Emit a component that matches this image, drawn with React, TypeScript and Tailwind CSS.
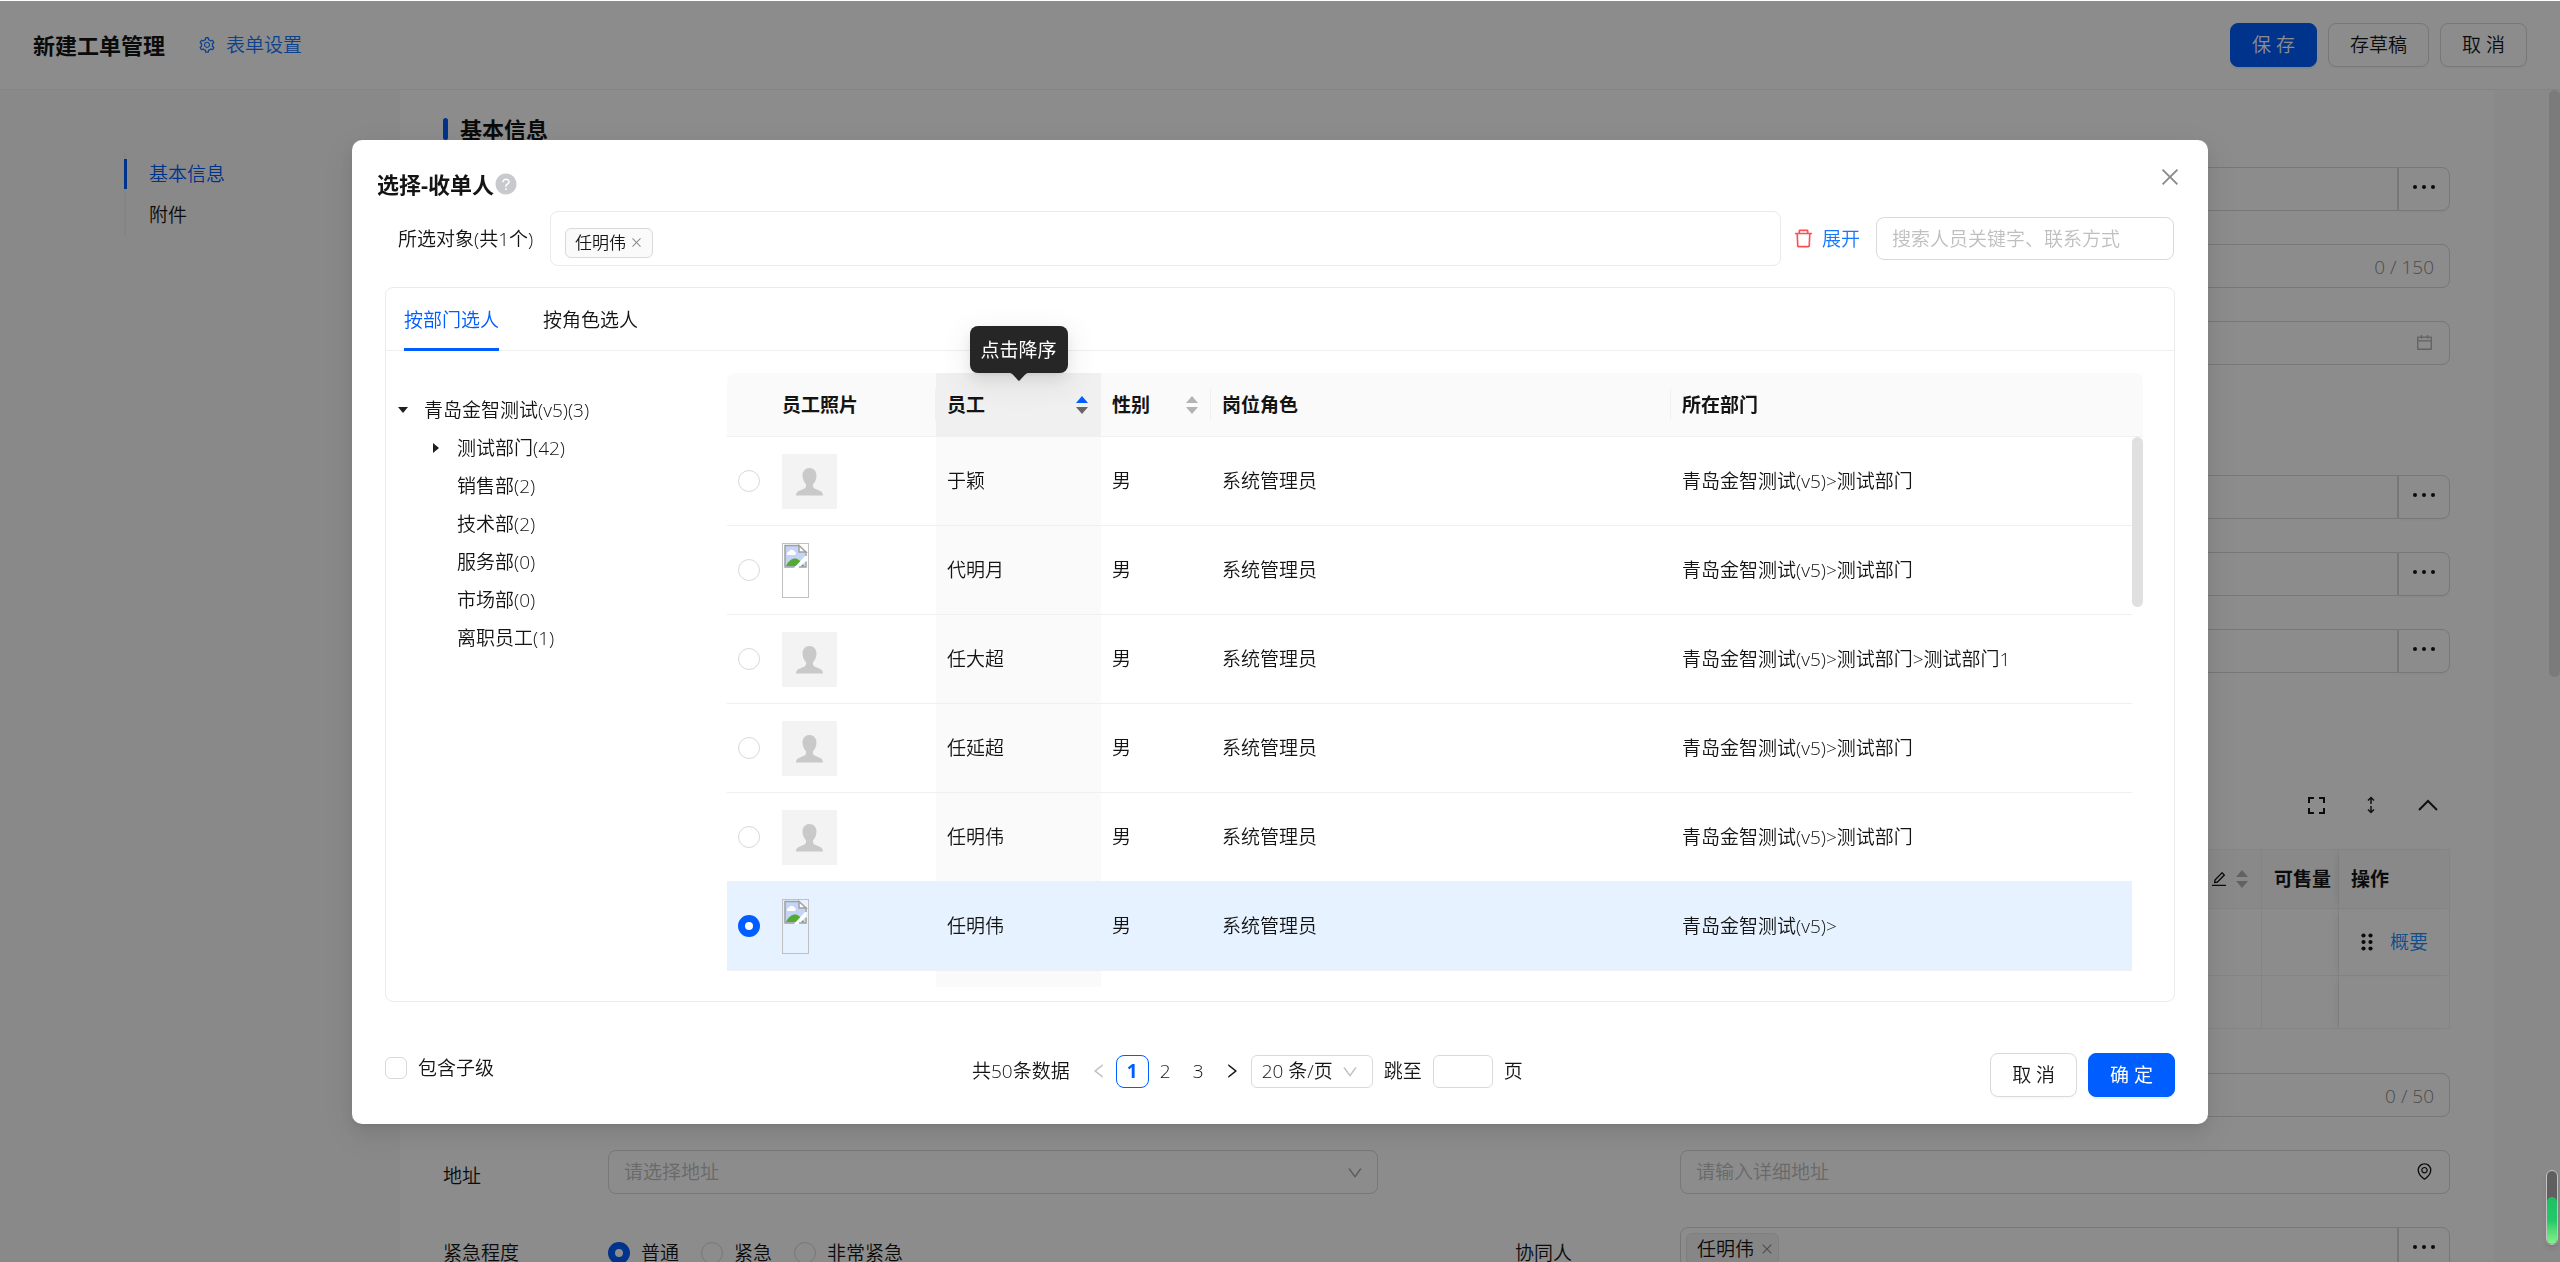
import { useState, type ReactNode } from "react";
import {
  AiFillQuestionCircle,
  AiOutlineCalendar,
  AiOutlineClose,
  AiOutlineDelete,
  AiOutlineDown,
  AiOutlineEdit,
  AiOutlineEnvironment,
  AiOutlineLeft,
  AiOutlineRight,
  AiOutlineSetting,
  AiOutlineUp,
} from "react-icons/ai";
import clsx from "clsx";

type Employee = {
  id: number;
  name: string;
  gender: string;
  role: string;
  dept: string;
  broken?: boolean;
};

const employees: Employee[] = [
  { id: 1, name: "于颖", gender: "男", role: "系统管理员", dept: "青岛金智测试(v5)>测试部门" },
  { id: 2, name: "代明月", gender: "男", role: "系统管理员", dept: "青岛金智测试(v5)>测试部门", broken: true },
  { id: 3, name: "任大超", gender: "男", role: "系统管理员", dept: "青岛金智测试(v5)>测试部门>测试部门1" },
  { id: 4, name: "任延超", gender: "男", role: "系统管理员", dept: "青岛金智测试(v5)>测试部门" },
  { id: 5, name: "任明伟", gender: "男", role: "系统管理员", dept: "青岛金智测试(v5)>测试部门" },
  { id: 6, name: "任明伟", gender: "男", role: "系统管理员", dept: "青岛金智测试(v5)>", broken: true },
];

const departments = [
  { label: "测试部门(42)", expandable: true },
  { label: "销售部(2)" },
  { label: "技术部(2)" },
  { label: "服务部(0)" },
  { label: "市场部(0)" },
  { label: "离职员工(1)" },
];

const radioClass =
  "block size-[22px] shrink-0 appearance-none rounded-full border border-[#d9d9d9] bg-white checked:border-[7px] checked:border-[#005dff]";
const buttonClass =
  "h-11 rounded-lg border border-[#d9d9d9] bg-white px-[21px] shadow-[0_2px_0_rgba(0,0,0,0.02)]";
const primaryClass =
  "h-11 rounded-lg border border-[#005dff] bg-[#005dff] px-[21px] text-white shadow-[0_2px_0_rgba(5,145,255,0.1)]";

function Sorter({ active }: { active?: boolean }) {
  return (
    <svg width="12" height="20" viewBox="0 0 12 20">
      <path d="M0 8 L6 1 L12 8 Z" fill={active ? "#005dff" : "#b3b3b3"} />
      <path d="M0 12 L6 19 L12 12 Z" fill={active ? "#666" : "#b3b3b3"} />
    </svg>
  );
}

function Dots() {
  return (
    <svg width="24" height="6" viewBox="0 0 24 6" fill="#141414">
      <circle cx="3" cy="3" r="2" />
      <circle cx="12" cy="3" r="2" />
      <circle cx="21" cy="3" r="2" />
    </svg>
  );
}

function Avatar() {
  return (
    <svg width="55" height="55" viewBox="0 0 55 55">
      <rect width="55" height="55" fill="#f3f3f3" />
      <path
        fill="#c9c9c9"
        d="M27.5 14 C31.8 14 34.5 17.3 34.5 21.5 C34.5 25 33 28.500 31 30.200 C30.600 32.500 31.300 34 33.500 35 C37.500 36.800 41 37.300 41 41.500 H14 C14 37.300 17.500 36.800 21.500 35 C23.700 34 24.400 32.500 24 30.200 C22 28.500 20.500 25 20.500 21.500 C20.500 17.300 23.200 14 27.500 14 Z"
      />
    </svg>
  );
}

function BrokenImage() {
  return (
    <svg width="27" height="55" viewBox="0 0 27 55">
      <rect x="0.5" y="0.5" width="26" height="54" fill="none" stroke="#c0c0c0" />
      <path d="M3 3 H17 L23 9 V24 H3 Z" fill="#c3d4f7" />
      <path d="M5 12 a2.500 2.500 0 0 1 2-3.500 a3 3 0 0 1 5.500 0 a2 2 0 0 1 .500 3.500 Z" fill="#fff" />
      <path d="M4 23 C6 18 10 15.500 13 15.500 C16 15.500 18.500 17.500 22 23 Z" fill="#57a935" />
      <path d="M24 12 L12 25 L17 25 L24 18 Z" fill="#fff" />
      <path d="M24 8.500 V13 M24 18.500 V24 H17 M12.500 24 H3 V2.500 H17" fill="none" stroke="#a0a0a0" strokeWidth="1.500" />
      <path d="M17 2.500 V9 H24 Z" fill="#fff" stroke="#a0a0a0" strokeWidth="1.500" />
    </svg>
  );
}

function Field({ label, name, children }: { label?: string; name: string; children?: ReactNode }) {
  return (
    <div className="col-start-2 flex">
      <div className="flex w-[165px] shrink-0 items-center pt-2">{label}</div>
      <div className="relative flex h-11 flex-1">
        <input aria-label={name} className="w-full rounded-lg border border-[#d9d9d9] bg-white px-4" />
        {children}
      </div>
    </div>
  );
}

function PickerField({ name, label, tag }: { name: string; label?: string; tag?: string }) {
  return (
    <div className="col-start-2 flex">
      <div className="flex w-[165px] shrink-0 items-center pt-2">{label}</div>
      <div className="relative flex h-11 flex-1">
        <input aria-label={name} className="min-w-0 flex-1 rounded-l-lg border border-[#d9d9d9] bg-white" />
        {tag && (
          <span className="absolute top-1.5 left-1.5 flex h-8 items-center gap-1.5 rounded-md border border-[#e8e8e8] bg-[#f5f5f5] pr-1 pl-2.5">
            {tag}
            <AiOutlineClose className="size-3.5 text-[#8c8c8c]" />
          </span>
        )}
        <button
          aria-label={name}
          className="flex w-13 items-center justify-center rounded-r-lg border border-[#d9d9d9] bg-white pb-1 shadow-[0_2px_0_rgba(0,0,0,0.02)]"
        >
          <Dots />
        </button>
      </div>
    </div>
  );
}

function PageForm() {
  return (
    <div className="flex h-screen flex-col overflow-hidden bg-white">
      <header className="flex h-[90px] shrink-0 items-center border-b border-[#f0f0f0] px-[33px]">
        <h1 className="text-[22px] font-bold">新建工单管理</h1>
        <a href="#settings" className="ml-[33px] flex items-center gap-2.5 text-[#1677ff]">
          <AiOutlineSetting className="size-[18px]" />
          表单设置
        </a>
        <div className="ml-auto flex gap-[11px]">
          <button className={primaryClass}>保 存</button>
          <button className={buttonClass}>存草稿</button>
          <button className={buttonClass}>取 消</button>
        </div>
      </header>

      <div className="relative flex flex-1 bg-[#fafafa]">
        <aside className="w-100 shrink-0 pt-[63px] pl-31">
          <ul className="border-l-2 border-[#f0f0f0] pl-[23px]">
            <li className="relative flex h-[41px] items-center text-[#005dff]">
              <span className="absolute top-1.5 -left-[25px] h-[30px] w-[3px] bg-[#005dff]" />
              <a href="#base">基本信息</a>
            </li>
            <li className="flex h-[41px] items-center">
              <a href="#files">附件</a>
            </li>
          </ul>
        </aside>

        <main className="min-w-0 flex-1 bg-white pt-7 pr-11 pl-[43px]">
          <h2 className="flex h-[22px] items-center gap-3 text-[22px] leading-[22px] font-bold">
            <span className="h-full w-[5px] rounded-sm bg-[#005dff]" />
            基本信息
          </h2>

          <div className="mt-[27px] grid grid-cols-2 gap-x-[137px] gap-y-[33px]">
            <PickerField name="客户" />
            <Field name="主题">
              <span className="absolute right-4 leading-[46px] text-[#8c8c8c]">0 / 150</span>
            </Field>
            <Field name="日期">
              <AiOutlineCalendar className="absolute top-3 right-4 size-[19px] text-[#b3b3b3]" />
            </Field>
          </div>
          <div className="mt-[110px] grid grid-cols-2 gap-x-[137px] gap-y-[33px]">
            <PickerField name="联系人" />
            <PickerField name="收单人" />
            <PickerField name="部门" />
          </div>

          <div className="mt-[120px] mb-8 flex h-6 items-center justify-end gap-[42px] pr-[11px]">
            <svg width="17" height="17" viewBox="0 0 17 17" fill="none" stroke="#141414" strokeWidth="2">
              <path d="M1 6 V1 H6 M11 1 H16 V6 M16 11 V16 H11 M6 16 H1 V11" />
            </svg>
            <svg width="8" height="18" viewBox="0 0 8 18" fill="none" stroke="#1f1f1f" strokeWidth="1.500">
              <path d="M4 8 V1.500 M1 4.500 L4 1.500 L7 4.500 M4 10 V16.500 M1 13.500 L4 16.500 L7 13.500" />
            </svg>
            <svg width="22" height="14" viewBox="0 0 22 14" fill="none" stroke="#1f1f1f" strokeWidth="2">
              <path d="M2 12 L11 3 L20 12" />
            </svg>
          </div>

          <table className="w-full table-fixed border-separate border-spacing-0 border-t border-r border-[#f0f0f0] text-left">
            <colgroup>
              <col />
              <col className="w-[77px]" />
              <col className="w-[110px]" />
            </colgroup>
            <thead>
              <tr className="h-[59px] bg-[#fafafa]">
                <th className="border-r border-b border-[#f0f0f0] pr-[13px]">
                  <div className="flex items-center justify-end gap-2">
                    <AiOutlineEdit className="size-[18px]" />
                    <Sorter />
                  </div>
                </th>
                <th className="border-r border-b border-[#f0f0f0] pl-3 font-bold whitespace-nowrap">可售量</th>
                <th className="border-b border-[#f0f0f0] pl-3 font-bold shadow-[-6px_0_8px_-4px_rgba(0,0,0,0.08)]">操作</th>
              </tr>
            </thead>
            <tbody>
              <tr className="h-[67px]">
                <td className="border-r border-b border-[#f0f0f0]" />
                <td className="border-r border-b border-[#f0f0f0]" />
                <td className="border-b border-[#f0f0f0] pl-[22px] shadow-[-6px_0_8px_-4px_rgba(0,0,0,0.08)]">
                  <div className="flex items-center gap-[17px]">
                    <svg width="12" height="18" viewBox="0 0 12 18" fill="#141414">
                      {[2.5, 9, 15.5].map((y) => (
                        <g key={y}>
                          <circle cx="2.500" cy={y} r="2.100" />
                          <circle cx="9.500" cy={y} r="2.100" />
                        </g>
                      ))}
                    </svg>
                    <a href="#summary" className="whitespace-nowrap text-[#1890ff]">概要</a>
                  </div>
                </td>
              </tr>
              <tr className="h-[53px]">
                <td className="border-r border-b border-[#f0f0f0]" />
                <td className="border-r border-b border-[#f0f0f0]" />
                <td className="border-b border-[#f0f0f0] shadow-[-6px_0_8px_-4px_rgba(0,0,0,0.08)]" />
              </tr>
            </tbody>
          </table>

          <div className="mt-11 grid grid-cols-2 gap-x-[137px] gap-y-[33px]">
            <Field name="电话">
              <span className="absolute right-4 leading-[46px] text-[#8c8c8c]">0 / 50</span>
            </Field>
            <div className="flex">
              <label htmlFor="region" className="flex w-[165px] shrink-0 items-center pt-2">地址</label>
              <div className="relative flex-1">
                <select
                  id="region"
                  className="h-11 w-full appearance-none rounded-lg border border-[#d9d9d9] bg-white px-[15px] text-[#bfbfbf]"
                >
                  <option>请选择地址</option>
                </select>
                <AiOutlineDown className="absolute top-3.5 right-3.5 size-[18px] text-[#a6a6a6]" />
              </div>
            </div>
            <div className="relative pl-[165px]">
              <input
                aria-label="详细地址"
                placeholder="请输入详细地址"
                className="h-11 w-full rounded-lg border border-[#d9d9d9] bg-white px-[15px] placeholder:text-[#bfbfbf]"
              />
              <AiOutlineEnvironment className="absolute top-3 right-4 size-[19px]" />
            </div>
            <div className="flex h-11 items-center pt-2">
              <span className="w-[165px] shrink-0">紧急程度</span>
              <div className="flex gap-[22px]">
                {["普通", "紧急", "非常紧急"].map((text, i) => (
                  <label key={text} className="flex items-center gap-[11px]">
                    <input type="radio" name="urgency" defaultChecked={i === 0} className={radioClass} />
                    {text}
                  </label>
                ))}
              </div>
            </div>
            <PickerField name="协同人" label="协同人" tag="任明伟" />
          </div>
        </main>
        <div className="w-[66px] shrink-0" />
        <div className="absolute top-0 right-0 h-[587px] w-[11px] rounded-full bg-[#e0e0e0]" />
      </div>
    </div>
  );
}

function DeptTree() {
  return (
    <ul className="w-[341px] shrink-0 pt-5">
      <li>
        <div className="flex h-[34px] items-center">
          <span className="flex w-[33px] justify-center">
            <svg width="10" height="6" viewBox="0 0 10 6">
              <path d="M0 0 H10 L5 6 Z" fill="#1f1f1f" />
            </svg>
          </span>
          <span className="pl-[5px]">青岛金智测试(v5)(3)</span>
        </div>
        <ul className="flex flex-col gap-1 pt-1 pl-[33px]">
          {departments.map((dept) => (
            <li key={dept.label} className="flex h-[34px] items-center">
              <span className="flex w-[33px] justify-center">
                {dept.expandable && (
                  <svg width="6" height="10" viewBox="0 0 6 10">
                    <path d="M0 0 V10 L6 5 Z" fill="#1f1f1f" />
                  </svg>
                )}
              </span>
              <span className="pl-[5px]">{dept.label}</span>
            </li>
          ))}
        </ul>
      </li>
    </ul>
  );
}

function HeadDivider() {
  return <span className="absolute top-4 right-0 h-[31px] w-px bg-[#f0f0f0]" />;
}

function EmployeeTable() {
  const [selected, setSelected] = useState(6);

  return (
    <div className="relative flex-1">
      <table className="w-full table-fixed border-separate border-spacing-0 text-left">
        <colgroup>
          <col className="w-11" />
          <col className="w-[165px]" />
          <col className="w-[165px]" />
          <col className="w-[110px]" />
          <col className="w-[460px]" />
          <col />
        </colgroup>
        <thead>
          <tr className="h-16 [&>th]:border-b [&>th]:border-[#f0f0f0] [&>th]:bg-[#fafafa] [&>th]:px-[11px] [&>th]:font-bold">
            <th className="rounded-tl-lg" />
            <th className="relative">
              员工照片
              <HeadDivider />
            </th>
            <th className="relative bg-[#f0f0f0]!">
              <div className="flex items-center justify-between pr-0.5">
                员工
                <Sorter active />
              </div>
              <div
                role="tooltip"
                className="absolute bottom-full left-1/2 flex h-[47px] -translate-x-1/2 items-center rounded-lg bg-[#262626] px-[11px] font-normal whitespace-nowrap text-white shadow-[0_6px_16px_rgba(0,0,0,0.08),0_3px_6px_-4px_rgba(0,0,0,0.12),0_9px_28px_8px_rgba(0,0,0,0.05)]"
              >
                点击降序
                <svg className="absolute top-full left-1/2 -translate-x-1/2" width="18" height="8" viewBox="0 0 18 8">
                  <path d="M0 0 H18 C16 0 10.500 6.500 9.700 7.500 Q9 8.200 8.300 7.500 C7.500 6.500 2 0 0 0 Z" fill="#262626" />
                </svg>
              </div>
            </th>
            <th className="relative">
              <div className="flex items-center justify-between pr-0.5">
                性别
                <Sorter />
              </div>
              <HeadDivider />
            </th>
            <th className="relative">
              岗位角色
              <HeadDivider />
            </th>
            <th className="rounded-tr-lg">所在部门</th>
          </tr>
        </thead>
        <tbody>
          {employees.map((emp) => {
            const active = emp.id === selected;
            return (
              <tr
                key={emp.id}
                className={clsx(
                  "h-[89px] [&>td]:border-b [&>td]:border-[#f0f0f0] [&>td]:px-[11px] [&>td]:py-0",
                  active && "bg-[#e6f2ff]",
                )}
              >
                <td>
                  <input
                    type="radio"
                    name="employee"
                    aria-label={emp.name}
                    checked={active}
                    onChange={() => setSelected(emp.id)}
                    className={radioClass}
                  />
                </td>
                <td>{emp.broken ? <BrokenImage /> : <Avatar />}</td>
                <td className={active ? undefined : "bg-[#fafafa]"}>{emp.name}</td>
                <td>{emp.gender}</td>
                <td>{emp.role}</td>
                <td>{emp.dept}</td>
              </tr>
            );
          })}
          <tr className="h-4">
            <td colSpan={2} />
            <td className="bg-[#fafafa]" />
            <td colSpan={3} />
          </tr>
        </tbody>
      </table>
      {/* scrollbar gutter under the fixed header */}
      <div className="absolute top-16 right-0 bottom-0 w-[11px] bg-white">
        <div className="h-[170px] rounded-full bg-[#e0e0e0]" />
      </div>
    </div>
  );
}

function Pagination() {
  return (
    <div className="flex h-9 items-center">
      <span>共50条数据</span>
      <button aria-label="上一页" className="ml-5 text-[#bfbfbf]">
        <AiOutlineLeft className="size-[18px]" />
      </button>
      <button className="ml-2 size-[33px] rounded-lg border border-[#005dff] font-bold text-[#005dff]">1</button>
      <button className="size-[33px]">2</button>
      <button className="size-[33px]">3</button>
      <button aria-label="下一页" className="ml-2">
        <AiOutlineRight className="size-[18px]" />
      </button>
      <div className="relative ml-2.5">
        <select
          aria-label="每页条数"
          className="h-[33px] w-[122px] appearance-none rounded-md border border-[#d9d9d9] bg-white px-2.5 leading-[29px]"
        >
          <option>20 条/页</option>
        </select>
        <AiOutlineDown className="absolute top-2 right-3.5 size-[18px] text-[#bfbfbf]" />
      </div>
      <label className="ml-[11px] flex items-center gap-[11px]">
        跳至
        <input className="h-[33px] w-[60px] rounded-md border border-[#d9d9d9]" />
        页
      </label>
    </div>
  );
}

function SelectDialog() {
  return (
    <div className="fixed inset-x-0 top-px bottom-0 bg-black/45">
      <div
        role="dialog"
        aria-label="选择-收单人"
        className="relative mx-88 mt-[139px] rounded-[10px] bg-white pt-7 pb-[27px] shadow-[0_7px_18px_rgba(0,0,0,0.08),0_3px_7px_-4px_rgba(0,0,0,0.12),0_10px_32px_10px_rgba(0,0,0,0.05)]"
      >
        <h2 className="flex h-8 items-center px-[25px] text-[22px] font-bold">
          选择-收单人
          <AiFillQuestionCircle className="size-6 text-[#c8c9cc]" />
        </h2>
        <button aria-label="关闭" className="absolute top-[19px] right-5 flex size-9 items-center justify-center text-[#8c8c8c]">
          <AiOutlineClose className="size-6" />
        </button>

        <div className="mt-[11px] flex h-[55px] items-center pr-[34px] pl-[46px]">
          <span className="w-[152px] shrink-0">所选对象(共1个)</span>
          <div className="flex h-full flex-1 items-center rounded-lg border border-[#e8eaec] px-3.5 pt-2">
            <span className="flex h-[30px] items-center gap-1 rounded-md border border-[#d9d9d9] bg-[#fafafa] px-[9px] text-[17px]">
              任明伟
              <button aria-label="移除">
                <AiOutlineClose className="size-[13px] text-[#8c8c8c]" />
              </button>
            </span>
          </div>
          <button aria-label="清空" className="ml-[11px] text-[#ff4d4f]">
            <AiOutlineDelete className="size-[23px]" />
          </button>
          <a href="#expand" className="ml-[7px] text-[#1677ff]">展开</a>
          <input
            aria-label="搜索人员"
            placeholder="搜索人员关键字、联系方式"
            className="ml-4 h-[43px] w-[298px] rounded-lg border border-[#d9d9d9] px-[15px] placeholder:text-[#bfbfbf]"
          />
        </div>

        <section className="mx-[33px] mt-[21px] rounded-lg border border-[#ebebeb] pb-3.5">
          <div className="flex h-[63px] gap-11 border-b border-[#f0f0f0] pt-0.5 pl-[18px]">
            <button className="relative h-full text-[#005dff]">
              按部门选人
              <span className="absolute inset-x-0 -bottom-px h-[3px] bg-[#005dff]" />
            </button>
            <button>按角色选人</button>
          </div>
          <div className="flex pt-[22px] pr-[31px]">
            <DeptTree />
            <EmployeeTable />
          </div>
        </section>

        <footer className="mx-[33px] mt-[51px] flex h-11 items-start">
          <label className="flex h-[30px] w-[587px] items-center gap-[11px]">
            <input type="checkbox" className="size-[22px] appearance-none rounded-md border border-[#d9d9d9] bg-white" />
            包含子级
          </label>
          <Pagination />
          <div className="ml-auto flex gap-[11px]">
            <button className={buttonClass}>取 消</button>
            <button className={clsx(primaryClass, "font-normal")}>确 定</button>
          </div>
        </footer>
      </div>
    </div>
  );
}

export default function App() {
  return (
    <div className="relative font-['Open_Sans','Noto_Sans_CJK_SC',sans-serif] text-[19px] leading-7 font-[350] text-[#141414]">
      <PageForm />
      <SelectDialog />
      <div className="fixed right-0.5 bottom-[17px] h-[75px] w-3 overflow-hidden rounded-full border border-[#c4c4c4] bg-[#5f5f5f] shadow-md">
        <div className="mt-[26px] h-12 rounded-full bg-linear-to-b from-[#1fbf63] via-[#22c968] to-[#86f58c]" />
      </div>
    </div>
  );
}
